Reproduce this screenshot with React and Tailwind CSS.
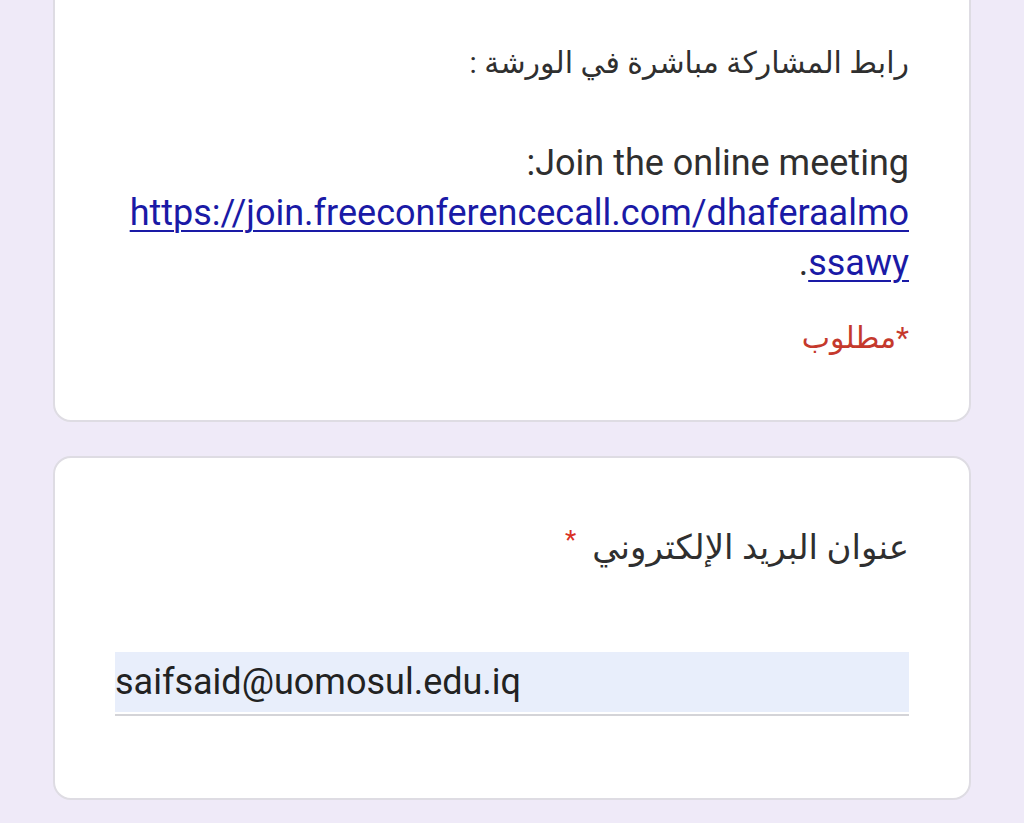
const font = { fontFamily: 'Roboto, "DejaVu Sans", sans-serif' };

export default function App() {
  return (
    <div
      dir="rtl"
      className="min-h-[823px] h-[823px] overflow-hidden bg-[#efeaf8] px-[53px]"
      style={font}
    >
      {/* Description card (top cut off) */}
      <div className="-mt-[20px] rounded-[18px] border-2 border-[#dedce3] bg-white px-[60px] pt-[56px] pb-[62px]">
        <div className="leading-[50px] text-[#2f2f2f]">
          <p className="text-[30px]">رابط المشاركة مباشرة في الورشة :</p>
          <p className="text-[30px]">&nbsp;</p>
          <p className="text-[36px]">Join the online meeting:</p>
          <p className="text-[36px]">
            <a
              href="#"
              className="text-[#1a1aa6] underline decoration-[2px] underline-offset-[5px]"
            >
              https://join.freeconferencecall.com/dhaferaalmo
              <br />
              ssawy
            </a>
            .
          </p>
        </div>
        <p className="mt-[30px] text-[30px] leading-[40px] text-[#c5392c]">
          *مطلوب
        </p>
      </div>

      {/* Email card */}
      <div className="mt-[34px] rounded-[18px] border-2 border-[#dedce3] bg-white px-[60px] pt-[64px] pb-[82px]">
        <div className="flex items-start gap-[16px] leading-[50px] text-[#2f2f2f]">
          <span className="text-[34px]">عنوان البريد الإلكتروني</span>
          <span className="text-[26px] leading-[36px] text-[#d93025]">*</span>
        </div>
        <div className="mt-[80px]" dir="ltr">
          <div className="flex h-[60px] items-center bg-[#e8eefb] text-[36px] text-[#222]">
            saifsaid@uomosul.edu.iq
          </div>
          <div className="mt-[2px] h-[2px] bg-[#d4d4d8]" />
        </div>
      </div>
    </div>
  );
}
